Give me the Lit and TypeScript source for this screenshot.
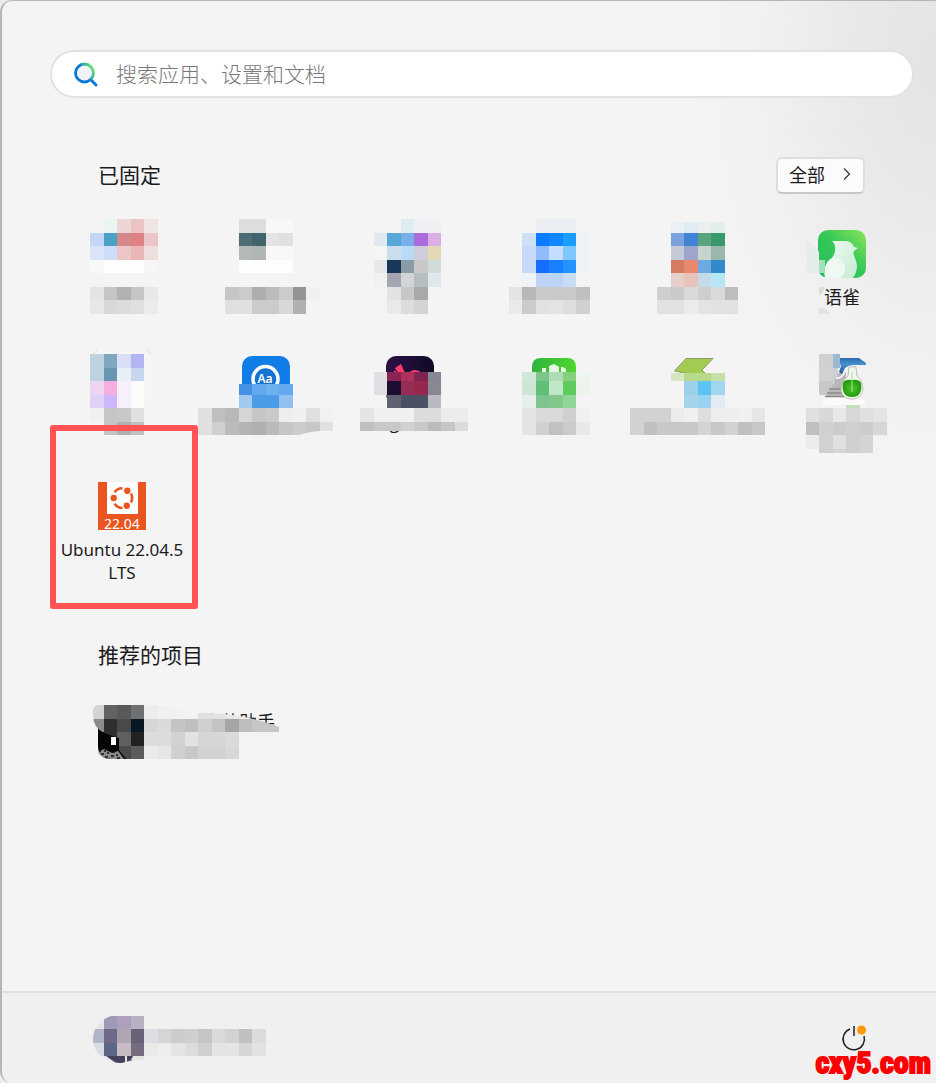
import { LitElement, html, svg, css, nothing } from "lit";
import { customElement } from "lit/decorators.js";

/* Mosaic tiles share one lattice so that neighbouring blocks line up. */
const CELL = 13.5;
const ORIGIN_X = 90;
const ORIGIN_Y = 219;
const edge = (origin: number, n: number) => Math.round(origin + CELL * n);

/** Rows are separated by "/", cells by spaces; "." is empty, two digits are a grey. */
function mosaic(col: number, row: number, data: string, top?: number, bottom?: number) {
  const rows = data.split("/");
  return rows.map((line, r) => {
    const y0 = r === 0 && top !== undefined ? top : edge(ORIGIN_Y, row + r);
    const y1 =
      r === rows.length - 1 && bottom !== undefined ? bottom : edge(ORIGIN_Y, row + r + 1);
    return line
      .trim()
      .split(/\s+/)
      .map((c, n) => {
        if (c === ".") return nothing;
        const x0 = edge(ORIGIN_X, col + n);
        const x1 = edge(ORIGIN_X, col + n + 1);
        const fill = c.length === 2 ? `#${c}${c}${c}` : `#${c}`;
        return svg`<rect x=${x0} y=${y0} width=${x1 - x0} height=${y1 - y0} fill=${fill} shape-rendering="crispEdges"></rect>`;
      });
  });
}

const art: unknown[] = [
  mosaic(0, 0, "f2f4f2 eaf4f2 edd5d6 ecc3c4 f0e5e4/c4d6f6 4aa3c6 d6878d de8285 ecc5c6/dae3f8 cfddfc ecc5c7 eab6b7 efdede/f8 fd fd fd f6/./e4 c5 b2 c5 e8/e7 d8 db df eb"),
  mosaic(10, 0, ". dd dd f8 f8/. 4f6b74 42646d e4 e0/. b5b9ba b0b6b6 f8 f8/. fd fd fd fd/./c5 cb ae bb cb 94 f0/e0 e0 cb cb d8 b0"),
  mosaic(20, 0, ". . . dfecf2 f1eff3 f1eff3/. dfe9ef 57a8d8 77afe8 aa6bdd dbaee6/. f3f6f5 cadeeb badbf4 d0cdda e3d7b5/. e7e7e9 193759 8a9ba8 cac8c6 d2dbdb/. f1 a4a6b0 d3d4d8 b6bebe dfe8ea/. . e2 c7 a9/. . e9 dc d4"),
  mosaic(31, 0, ". . ebeff4 ebeff4 ebeff4/. cfdff7 0c7bff 0f88ff 1b9cff eff3f6/. c7d8f8 90bbff c3deff 81c7ff eff3f6/. c7d8f8 146eff 1a81fe 2493ff eff3f6/. eff3f8 bed2f6 bad4f6 c8dcf6/e4 b8 ca ca ca c0/e9 cb e1 e3 dd d0"),
  mosaic(42, 0, ". ebf0f4 e0ecf4 ebf0ee e2efe9/. 7ca2db 4183d6 5aa57f 38996a/. c5cadb 9ba6ca c7d4cd 9bb7ab/. d47b62 e8896e 6daae3 338aca/. e6cfca e8c3bb c5dbea b4e6f5/cf ca da ce da bd/e1 e1 eb e3 e1 e1", 222),
  svg`
    <defs>
      <linearGradient id="leaf" x1="0" y1="1" x2="1" y2="0">
        <stop offset="0" stop-color="#22bd5b"></stop><stop offset="0.55" stop-color="#36c957"></stop>
        <stop offset="1" stop-color="#8be45a"></stop>
      </linearGradient>
      <linearGradient id="bird" x1="0" y1="0" x2="1" y2="1">
        <stop offset="0" stop-color="#effaf2"></stop><stop offset="1" stop-color="#c4ecd2"></stop>
      </linearGradient>
    </defs>
    <rect x="818" y="230" width="48" height="48" rx="10" fill="url(#leaf)"></rect>
    <path d="M832 241H846C850 241 853 244 854 247L858 248L854 251C852 255 857 260 857 266C857 271 855 275 853 278H826C823 274 824 267 828 263C833 257 836 252 835 247C835 245 834 243 832 241Z" fill="url(#bird)"></path>
    <path d="M825 278C824 270 825 258 835 258C842 258 846 264 845 270C844 274 842 276 840 278Z" fill="#eef9f3"></path>
    <path d="M806 240L815 246L819 252V273H806Z" fill="#e6ede9"></path>
    <rect x="819" y="260" width="6" height="13" fill="#a4dfbf"></rect>
    <path d="M819 287H825L823 292L819 296Z" fill="#dcdcdc"></path>
    <path d="M819 308L825 309L831 314H819Z" fill="#e2e2e2"></path>`,
  svg`<path d="M90 358Q93 350 104 350H138Q146 350 151 354V400H90Z" fill="#f6f6f6"></path>
    <path d="M91 358Q93 352 98 350M146 350L151 354" fill="none" stroke="#dedede"></path>
    ${mosaic(0, 10, "bed3df 7fa7bf dbdff6 b2b5f4/bdd3df 6896b1 e8eff7 c7d6ee/edd4f0 f6aee1 f8eefc fc/e0d1f6 ceb6fe f5f0fc fc/f0 c6 c8 e0/. c4 b0 c0")}`,
  svg`<rect x="242" y="356" width="48" height="48" rx="10" fill="#117ee8"></rect>
    <circle cx="265.500" cy="379" r="12.500" fill="#1473d2" stroke="#fff" stroke-width="3.500"></circle>
    <text x="265" y="383" class="aa">Aa</text>
    ${mosaic(11, 12, "4293e4 62a8ef 6db0f0 64a9ef/a2c9f1 4b9be6 4b9be6 90bff0", 384)}
    ${mosaic(8, 14, "e0 bf b8 d6 c6 ca ee f0 df f1/e0 cf bb b4 b0 ba c6 cc c7 e0")}
    <path d="M296 436Q312 430 334 431V436Z" fill="#f4f4f4"></path>`,
  svg`
    <defs><linearGradient id="night" x1="0" y1="0" x2="1" y2="0">
      <stop offset="0" stop-color="#2b1145"></stop><stop offset="1" stop-color="#0f0a26"></stop>
    </linearGradient></defs>
    <rect x="386" y="356" width="48" height="48" rx="10" fill="url(#night)"></rect>
    <path d="M395 368L401 364L405 373H398ZM393 373L395 370L397 373ZM408 373Q415 367 422 373Z" fill="#fb3c6c"></path>
    <text x="389" y="429" class="peek">g</text>
    ${mosaic(21, 11, "e0e0e4 8a2450 b0305c 7d2450 858894/e0e0e4 1d0d30 982c54 962850 868894/. 606272 4c5064 4c5064 b8babf", 372)}
    ${mosaic(20, 14, "e4 f0 f0 f0 dc dc ec ec/c0 c8 c8 d0 c8 bc c6 dc", undefined, 431)}`,
  svg`
    <defs><linearGradient id="grass" x1="0" y1="0" x2="1" y2="0">
      <stop offset="0" stop-color="#2fb33d"></stop><stop offset="1" stop-color="#4ed731"></stop>
    </linearGradient></defs>
    <path d="M532 400V367Q532 358 541 358H567Q576 358 576 367V400Z" fill="url(#grass)"></path>
    <path d="M542 373V368H546V373ZM549 373V366L554 364L559 367V373ZM561 373V367H563L566 369V373Z" fill="#e8f7e4"></path>
    ${mosaic(32, 11, "cfe8d5 7cc68e b0dcb4 85d07a eef4ee/cde6d3 60bf76 bfe7c5 5fca5e ebf3ea/e4f0e9 7dc490 82c88c 92d598/e4 d9 d9 d0 f0/e4 d0 c1 cb e8", 372)}`,
  svg`
    <path d="M674.500 371L686 358.500H713L702 370L706 374H690Z" fill="#a4cb51" stroke="#8b9c6c"></path>
    ${mosaic(43, 11, "d6e4c0 b8d88c b8d88c c8dfa8/. 9ad0e8 5cc3f2 a2d6f0/. a4d3ea 9ad3f0 e4eaf4", 373)}
    ${mosaic(40, 14, "d2 d2 d2 eb f0 de ee ee f0 e6/d2 c0 c8 c8 c8 d4 c8 d2 c0 c8")}`,
  svg`
    <defs>
      <linearGradient id="nozzle" x1="0" y1="0" x2="0" y2="1">
        <stop offset="0" stop-color="#2c6cab"></stop><stop offset="0.4" stop-color="#4a8fce"></stop>
        <stop offset="1" stop-color="#1d568f"></stop>
      </linearGradient>
      <radialGradient id="liquid"><stop offset="0" stop-color="#4fc72a"></stop><stop offset="1" stop-color="#249a10"></stop></radialGradient>
    </defs>
    <path d="M824 398H864L866 405H821Z" fill="#fafafa"></path>
    ${mosaic(54, 10, "d0/d2/c8", undefined, 395)}
    <rect x="833" y="354" width="7" height="14" fill="#9cb8d2"></rect>
    <rect x="833" y="368" width="5" height="14" fill="#ccd1d4"></rect>
    <path d="M838 373L832 387L825 397H846V372Z" fill="#b9b9b9"></path>
    <path d="M829 389H842M827 393H843M825 396.500H845" stroke="#8c8c8c" stroke-width="1.500"></path>
    <path d="M836 378Q842 379 845 371" fill="none" stroke="#f2f2f2" stroke-width="2"></path>
    <path d="M849 367H856L857 376C861 379 863 385 863 389C862 396 858 399 852 399C846 399 842 396 841 390C841 385 844 379 848 376Z" fill="#f3f6f1" stroke="#bdbdb9"></path>
    <path d="M843 383Q845 379 852 380Q859 379 861 383Q862 389 860 393Q858 397 852 397Q846 397 844 393Q842 389 843 383Z" fill="url(#liquid)"></path>
    <path d="M852 372V392" stroke="#a5e08f"></path>
    <path d="M840 358H859L866 363V365H855Q848 365 845 368L842 374L839 372L841 366L840 364Z" fill="url(#nozzle)"></path>
    <rect x="846" y="405" width="14" height="3" fill="#c4dfbe"></rect>
    ${mosaic(53, 14, "e0 d8 e8 d8 e0 e4/c0 d0 cc cf cc d6/ec d2 e0 d0 d4/. cf d4 cf d4", undefined, 453)}`,
  svg`
    <rect x="98" y="482" width="48" height="48" fill="#e9541f"></rect>
    <rect x="107" y="482" width="31" height="32" fill="#fff"></rect>
    <g fill="none" stroke="#e9541f" stroke-width="2.600">
      <path d="M114.500 492.200A10 10 0 0 1 122.500 488.300M131 493.500A10 10 0 0 1 131 502.500M122.500 508A10 10 0 0 1 114.500 503.800"></path>
    </g>
    <g fill="#e9541f"><circle cx="113.700" cy="498" r="3.200"></circle><circle cx="127.300" cy="490.700" r="3.200"></circle><circle cx="126.800" cy="505.800" r="3.200"></circle></g>
    <text x="122" y="529" class="version">22.04</text>`,
];

const labels: Record<number, string> = { 5: "语雀", 12: "Ubuntu 22.04.5 LTS" };

@customElement("app-root")
export class AppRoot extends LitElement {
  static styles = css`
    :host {
      display: block;
      font-family: "Noto Sans", "Noto Sans CJK SC", sans-serif;
      color: #1b1b1b;
      background: #ededed;
    }
    * { box-sizing: border-box; }
    button { font: inherit; color: inherit; background: none; border: 0; padding: 0; }
    svg { display: block; overflow: visible; }
    .menu {
      position: relative;
      display: flex;
      flex-direction: column;
      min-height: 100vh;
      border-left: 2px solid #b6b6b6;
      border-top: 1px solid #b6b6b6;
      border-radius: 12px 0 0 12px;
      overflow: hidden;
      background:
        radial-gradient(ellipse 260px 440px at 100% 60px, #e3e3e3 0%, #e8e8e8 30%, #f0f0f0 65%, #f4f4f4 100%) #f4f4f4;
    }
    .edge {
      position: absolute;
      top: -1px;
      right: 0;
      width: 94px;
      height: 1px;
      background: #2b272c;
    }
    main { flex: 1; padding: 49px 22px 0 48px; }
    .search {
      display: flex;
      align-items: center;
      gap: 18px;
      height: 48px;
      padding: 0 22px;
      border: 2px solid #e2e2e2;
      border-radius: 24px;
      background: #fff;
    }
    .search input {
      flex: 1;
      min-width: 0;
      border: 0;
      outline: 0;
      padding: 0 0 2px;
      background: none;
      font: 300 21px/30px "Noto Sans CJK SC", sans-serif;
    }
    .search input::placeholder { color: #787878; opacity: 1; }
    .heading {
      display: flex;
      align-items: center;
      justify-content: space-between;
      padding: 0 49px 0 48px;
    }
    .pinned { margin-top: 59px; }
    h2 { margin: 0; padding-bottom: 4px; font: 400 21px/30px "Noto Sans CJK SC", sans-serif; }
    .all {
      display: flex;
      align-items: center;
      gap: 18px;
      height: 37px;
      padding: 0 12px 4px 11px;
      border: 2px solid #dedede;
      border-bottom-color: #c8c8c8;
      border-radius: 6px;
      background: #fbfbfb;
      font: 400 18px/26px "Noto Sans CJK SC", sans-serif;
    }
    .grid {
      display: grid;
      grid-template-columns: repeat(6, 1fr);
      grid-auto-rows: 126px;
      margin-top: 18px;
    }
    .app { position: relative; display: flex; flex-direction: column; align-items: center; }
    .icon { width: 144px; height: 74px; flex: none; }
    .label { width: 132px; font-size: 17px; line-height: 23px; text-align: center; }
    .cjk { font-size: 18px; }
    .mark {
      position: absolute;
      inset: -39px -4px -19px 0;
      border: 6px solid #ff5252;
      border-radius: 3px;
      pointer-events: none;
    }
    .aa { font: 600 12px "Noto Sans", sans-serif; fill: #fff; text-anchor: middle; }
    .version { font: 400 14px "Noto Sans", sans-serif; fill: #fff; text-anchor: middle; }
    .peek { font: 400 18px "Noto Sans CJK SC", sans-serif; fill: #1b1b1b; }
    .recommended { margin-top: 49px; }
    .item { display: block; margin: 32px 0 0 41px; }
    footer {
      display: flex;
      align-items: center;
      justify-content: space-between;
      height: 92px;
      padding: 0 69px 0 91px;
      border-top: 2px solid #e0e0e0;
      background: #f0f0f0;
    }
    .watermark {
      position: absolute;
      right: 5px;
      bottom: 2px;
      font: 700 30px/36px "Roboto Condensed", "Liberation Sans", sans-serif;
      color: #f00;
      -webkit-text-stroke: 2px #f00;
      paint-order: stroke fill;
    }
  `;

  private app(content: unknown, n: number) {
    const x = 50 + 144 * (n % 6);
    const y = 212 + 126 * Math.floor(n / 6);
    const label = labels[n];
    return html`<button class="app" aria-label=${label ?? "应用"}>
      <svg class="icon" viewBox="${x} ${y} 144 74">${content}</svg>
      ${label ? html`<span class="label ${n === 5 ? "cjk" : ""}">${label}</span>` : nothing}
      ${n === 12 ? html`<span class="mark"></span>` : nothing}
    </button>`;
  }

  render() {
    return html`<div class="menu">
      <div class="edge"></div>
      <main>
        <label class="search">
          <svg width="24" height="26" viewBox="0 0 24 26" fill="none" aria-hidden="true">
            <defs><linearGradient id="lens" x1="0" y1="0.600" x2="1" y2="0">
              <stop offset="0.400" stop-color="#0a78d6"></stop><stop offset="0.600" stop-color="#2eb5a8"></stop>
              <stop offset="0.850" stop-color="#5fe070"></stop>
            </linearGradient></defs>
            <path d="M16.500 18.500L22 24" stroke="#0c78d8" stroke-width="3" stroke-linecap="round"></path>
            <circle cx="10.500" cy="12" r="9" fill="#f1f3f6" stroke="url(#lens)" stroke-width="2.800"></circle>
          </svg>
          <input type="search" placeholder="搜索应用、设置和文档" aria-label="搜索" />
        </label>
        <div class="heading pinned">
          <h2>已固定</h2>
          <button class="all">全部
            <svg width="8" height="14" viewBox="0 0 8 14" fill="none" stroke="#333" stroke-width="1.200" aria-hidden="true"><path d="M1 1.500L6.500 7L1 12.500"></path></svg>
          </button>
        </div>
        <div class="grid">${art.map((content, n) => this.app(content, n))}</div>
        <div class="heading recommended"><h2>推荐的项目</h2></div>
        <button class="item" aria-label="推荐的项目">
          <svg width="190" height="56" viewBox="91 705 190 56">
            <text x="203" y="729" class="peek">安装助手</text>
            <path d="M98 722H144V759H112Q98 759 98 746Z" fill="#050505"></path>
            <path d="M98 752L104 749L112 753L118 751L124 759H112Q101 759 98 752Z" fill="#8a8a8a"></path>
            <path d="M99 751h2M104 751h2M101 754h3M107 753h2M105 757h3M111 756h3M116 755h2M113 752h2M117 758h3" stroke="#111" stroke-width="1.500"></path>
            <rect x="111" y="737" width="5" height="8" fill="#fff"></rect>
            <clipPath id="smudge"><path d="M93 710Q94 705 100 705H160Q176 707 186 711Q192 713 198 713Q225 713 244 717Q268 722 279 727V759H126L119 750V738Q112 736 104 733Q93 727 93 716Z"></path></clipPath>
            <g clip-path="url(#smudge)">
              ${mosaic(0, 36, "d4 5f6362 595959 6e7072 ed f0 f1 f2 e0 e2 e6 ec/8c 2e 4a 081825 d6 da c4 bf cf c4 a6 bd c6 c6/. 30 60 22 dc dc d2 e2 d6 d6 da f3 f3 f3/. 30 4a 595c5b eb e6 d0 c8 d2 d2 d8 f3 f3 f3")}
            </g>
          </svg>
        </button>
      </main>
      <footer>
        <button aria-label="用户">
          <svg width="176" height="48" viewBox="93 1014 176 48">
            <clipPath id="face"><path d="M144 1016V1060H136Q129 1063 120 1063A27 24 0 0 1 93 1039A24 24 0 0 1 112 1016Z"></path></clipPath>
            <g clip-path="url(#face)">
              <rect x="93" y="1015" width="51" height="48" fill="#e6e6e8"></rect>
              ${mosaic(0, 59, ". 9c9ab6 ae9fbf b5b0c2/b0b4c4 6e6988 b0a5b2 686279/d8dbe0 5c6688 c8bcc4 766c80")}
              <path d="M106 1056H144V1060L136 1059L122 1063H116Z" fill="#45415c"></path>
              <path d="M125 1056h2v6h-2zM133 1056H144V1060H131Z" fill="#e8e2e2"></path>
            </g>
            ${mosaic(4, 60, "dcdee4 d5 cc cf c6 da d2 c0 dc/ea ed e4 dc cf e4 e4 d6 e2")}
          </svg>
        </button>
        <button aria-label="电源">
          <svg width="26" height="26" viewBox="0 0 26 26" fill="none">
            <path d="M9 4A10.700 10.700 0 1 0 23 11" stroke="#222" stroke-width="1.500"></path>
            <path d="M13 1V11" stroke="#555" stroke-width="2"></path>
            <circle cx="20.500" cy="5" r="4.500" fill="#ff9a00"></circle>
          </svg>
        </button>
      </footer>
      <div class="watermark">cxy5.com</div>
    </div>`;
  }
}
